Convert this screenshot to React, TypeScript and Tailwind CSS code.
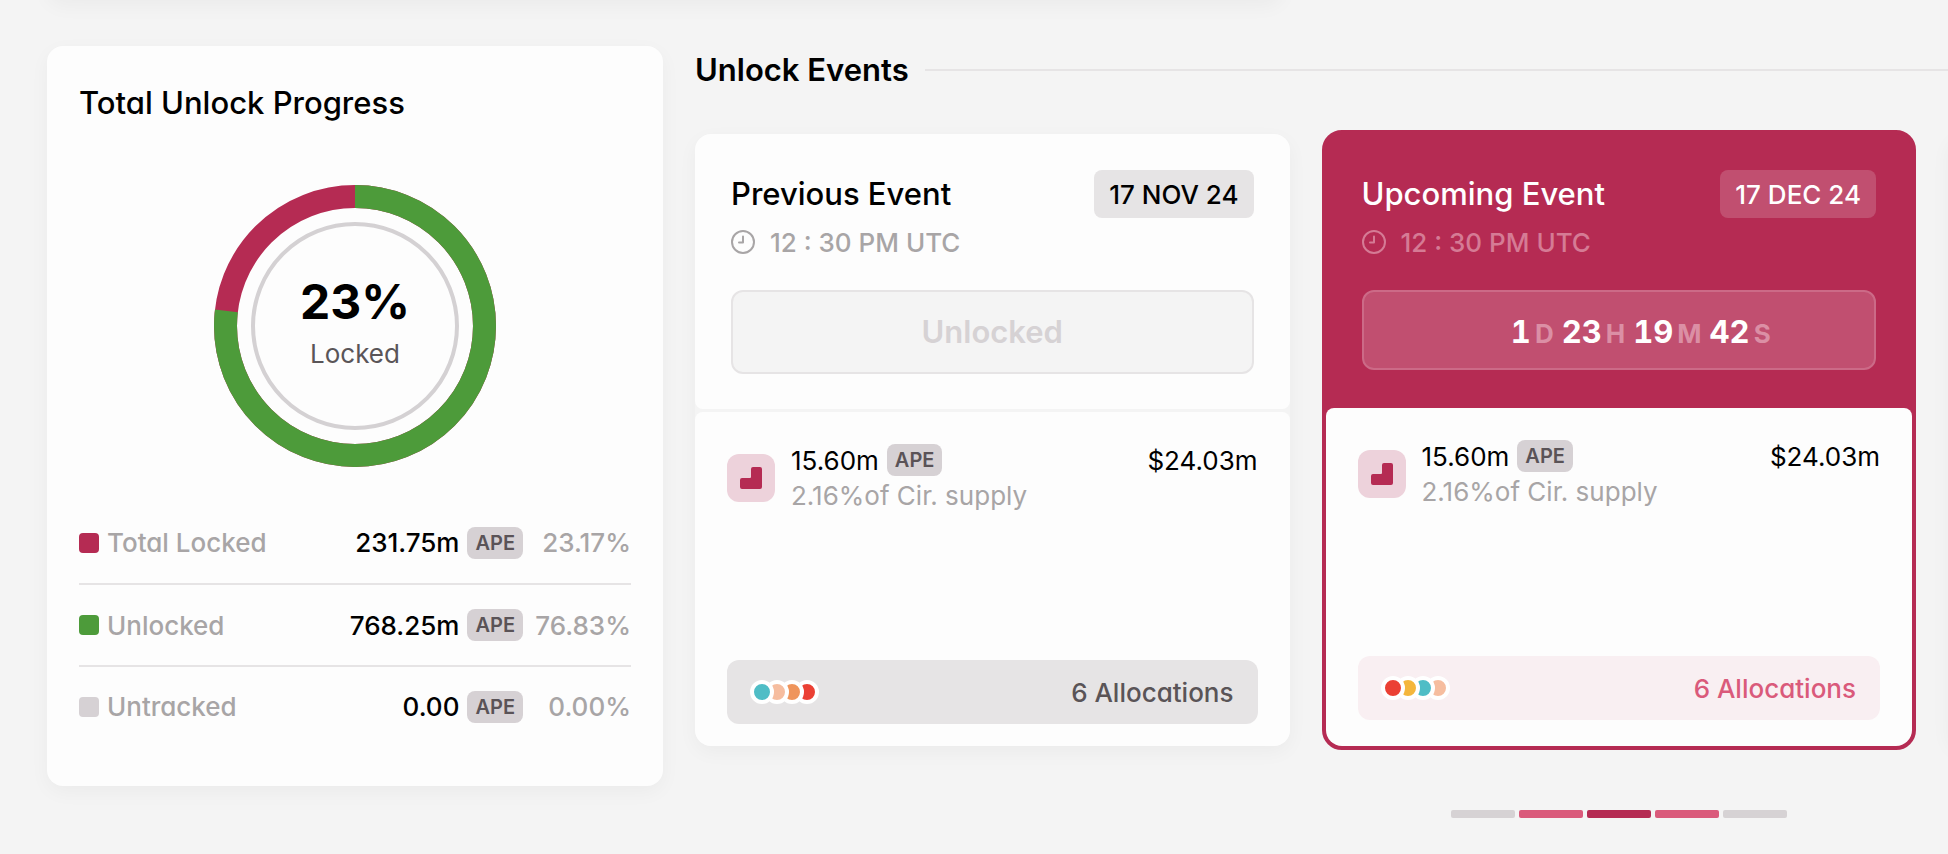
import { useState } from 'react';
import clsx from 'clsx';

const supply = [
  { label: 'Total Locked', amount: '231.75m', percent: '23.17%', swatch: 'bg-[#b52b53]' },
  { label: 'Unlocked', amount: '768.25m', percent: '76.83%', swatch: 'bg-[#4d9b3a]' },
  { label: 'Untracked', amount: '0.00', percent: '0.00%', swatch: 'bg-[#d6d1d4]' },
];

const countdown = [
  { value: '1', unit: 'D' },
  { value: '23', unit: 'H' },
  { value: '19', unit: 'M' },
  { value: '42', unit: 'S' },
];

const slides = [0, 1, 2, 3, 4];

function TokenBadge() {
  return (
    <span className="flex h-8 items-center rounded-lg bg-[#d6d1d4] px-2 text-xl font-semibold text-[#5a5357]">
      APE
    </span>
  );
}

function ClockIcon() {
  return (
    <svg viewBox="0 0 24 24" className="h-6 w-6" fill="none" stroke="currentColor" strokeWidth="2" aria-hidden="true">
      <circle cx="12" cy="12" r="11" />
      <path d="M12 6.5V12.5H8" strokeLinecap="round" strokeLinejoin="round" />
    </svg>
  );
}

function CliffIcon() {
  return (
    <span className="mt-[10px] flex h-12 w-12 shrink-0 items-center justify-center rounded-xl bg-[#edd2db]">
      <svg viewBox="0 0 22 22" className="h-[22px] w-[22px]" fill="#b52b53" aria-hidden="true">
        <path d="M13 0H20A2 2 0 0 1 22 2V20A2 2 0 0 1 20 22H2A2 2 0 0 1 0 20V13A2 2 0 0 1 2 11H10A1 1 0 0 0 11 10V2A2 2 0 0 1 13 0Z" />
      </svg>
    </span>
  );
}

function UnlockDonut() {
  const radius = 129.5;
  const length = 2 * Math.PI * radius;
  const unlocked = length * 0.7683;

  return (
    <div className="relative mx-auto mt-[62px] h-[282px] w-[282px]">
      <svg viewBox="0 0 282 282" className="h-full w-full" fill="none" aria-hidden="true">
        <circle cx="141" cy="141" r={radius} stroke="#b52b53" strokeWidth="23" />
        <circle
          cx="141"
          cy="141"
          r={radius}
          stroke="#4d9b3a"
          strokeWidth="23"
          strokeDasharray={`${unlocked} ${length}`}
          transform="rotate(-90 141 141)"
        />
        <circle cx="141" cy="141" r="102" stroke="#d4d1d3" strokeWidth="4" />
      </svg>
      <div className="absolute inset-0 flex flex-col items-center justify-center">
        <span className="text-5xl leading-14 font-bold">23%</span>
        <span className="text-[26px] leading-12 text-[#5a5558]">Locked</span>
      </div>
    </div>
  );
}

function Allocations({ colors, className }: { colors: string[]; className: string }) {
  return (
    <button
      type="button"
      className={clsx('mt-36 flex h-16 w-full items-center justify-between rounded-xl pr-6 pl-[23px] font-medium', className)}
    >
      <svg viewBox="0 0 69 24" className="h-6 w-[69px]" aria-hidden="true">
        {[...colors].reverse().map((color, i) => (
          <circle key={color} cx={57 - i * 15} cy="12" r="10" fill={color} stroke="#fff" strokeWidth="4" />
        ))}
      </svg>
      6 Allocations
    </button>
  );
}

function EventAmount() {
  return (
    <div className="flex gap-4">
      <CliffIcon />
      <div className="flex-1">
        <div className="flex h-8 items-center justify-between">
          <div className="flex items-center gap-2">
            15.60m
            <TokenBadge />
          </div>
          <span>$24.03m</span>
        </div>
        <p className="leading-10 text-[#a8a5a6]">2.16%of Cir. supply</p>
      </div>
    </div>
  );
}

function PreviousEvent() {
  return (
    <article className="rounded-2xl shadow-[0_6px_20px_rgba(0,0,0,0.04)]">
      <div className="rounded-t-2xl rounded-b-lg bg-[#fdfdfd] px-9 pt-9 pb-[35px]">
        <div className="flex h-12 items-center justify-between">
          <h3 className="text-[31px] font-medium">Previous Event</h3>
          <time className="flex h-12 items-center rounded-lg bg-[#e6e4e5] px-[15px] font-medium">17 NOV 24</time>
        </div>
        <p className="flex h-12 items-center gap-[15px] font-medium text-[#a8a5a6]">
          <ClockIcon />
          12 : 30 PM UTC
        </p>
        <div className="mt-6 flex h-[84px] items-center justify-center rounded-xl border-2 border-[#e6e4e5] bg-[#f4f4f4] text-[31px] font-semibold text-[#d6d2d4]">
          Unlocked
        </div>
      </div>
      <div className="mt-[3px] rounded-t-lg rounded-b-2xl bg-[#fdfdfd] px-8 pt-8 pb-[22px]">
        <EventAmount />
        <Allocations colors={['#4fbdc6', '#f6bd9f', '#ef955c', '#eb4034']} className="bg-[#e6e4e5] text-[#5a5457]" />
      </div>
    </article>
  );
}

function UpcomingEvent() {
  return (
    <article className="rounded-[20px] border-4 border-[#b52b53] bg-[#b52b53]">
      <div className="px-9 pt-9 pb-[38px] text-white">
        <div className="flex h-12 items-center justify-between">
          <h3 className="text-[31px] font-medium">Upcoming Event</h3>
          <time className="flex h-12 items-center rounded-lg bg-[#c14f70] px-[15px] font-medium">17 DEC 24</time>
        </div>
        <p className="flex h-12 items-center gap-[15px] font-medium text-[#d57b95]">
          <ClockIcon />
          12 : 30 PM UTC
        </p>
        <div className="mt-6 flex h-20 items-center justify-center gap-2 rounded-xl border-2 border-[#cc6a87] bg-[#c14f70] pt-1 pl-11">
          {countdown.map(({ value, unit }) => (
            <span key={unit} className="flex items-baseline gap-1 text-[31px] font-bold tabular-nums">
              {value}
              <span className="text-[26px] text-[#db8fa5]">{unit}</span>
            </span>
          ))}
        </div>
      </div>
      <div className="rounded-t-lg rounded-b-2xl bg-[#fdfdfd] px-8 pt-8 pb-[26px]">
        <EventAmount />
        <Allocations colors={['#eb4034', '#f4b63c', '#4fbdc6', '#f6bd9f']} className="bg-[#f9eff2] text-[#da5a7b]" />
      </div>
    </article>
  );
}

export default function App() {
  const [active, setActive] = useState(2);

  return (
    <div className="min-h-screen overflow-hidden bg-[#f4f4f4] pl-[47px] font-['Inter',sans-serif] text-[26px] text-black [font-feature-settings:'cv11']">
      {/* Bottom edge of the card above */}
      <div className="-mt-16 h-16 w-[65%] rounded-2xl bg-[#fdfdfd] shadow-[0_6px_20px_rgba(0,0,0,0.04)]" />

      <main className="mt-[46px] grid grid-cols-[minmax(0,616fr)_minmax(0,1253fr)] items-start gap-8">
        <section className="rounded-2xl bg-[#fdfdfd] px-8 pt-[37px] pb-10 shadow-[0_6px_20px_rgba(0,0,0,0.04)]">
          <h2 className="text-[31px] leading-10 font-medium">Total Unlock Progress</h2>
          <UnlockDonut />
          <table className="mt-[35px] w-full font-medium">
            <tbody>
              {supply.map((row) => (
                <tr key={row.label} className="h-[82px] border-b-2 border-[#e6e4e5] last:h-20 last:border-b-0">
                  <th scope="row" className="p-0 text-left font-medium text-[#a8a5a6]">
                    <span className="flex items-center gap-2">
                      <span className={clsx('h-5 w-5 rounded', row.swatch)} />
                      {row.label}
                    </span>
                  </th>
                  <td className="p-0">
                    <span className="flex items-center justify-end gap-2">
                      {row.amount}
                      <TokenBadge />
                    </span>
                  </td>
                  <td className="w-[108px] p-0 text-right text-[#a8a5a6]">{row.percent}</td>
                </tr>
              ))}
            </tbody>
          </table>
        </section>

        <section>
          <div className="flex h-12 items-center gap-4">
            <h2 className="text-[31px] font-semibold">Unlock Events</h2>
            <div className="h-[2px] flex-1 bg-[#e6e4e5]" />
          </div>
          <div className="mt-9 grid auto-cols-[calc(50%-32px)] grid-flow-col items-center gap-x-8">
            <PreviousEvent />
            <UpcomingEvent />
            <div className="h-[612px] rounded-2xl bg-[#fdfdfd] shadow-[0_6px_20px_rgba(0,0,0,0.04)]" />
          </div>
          <div className="mt-[60px] grid grid-cols-[calc(50%-32px)_calc(50%-32px)] gap-x-8">
            <div className="col-start-2 flex justify-center gap-1">
              {slides.map((slide) => (
                <button
                  key={slide}
                  type="button"
                  aria-label={`Event ${slide + 1}`}
                  onClick={() => setActive(slide)}
                  className={clsx(
                    'h-2 w-16 rounded-xs',
                    slide === active && 'bg-[#b52b53]',
                    Math.abs(slide - active) === 1 && 'bg-[#da5a7b]',
                    Math.abs(slide - active) > 1 && 'bg-[#d6d2d4]'
                  )}
                />
              ))}
            </div>
          </div>
        </section>
      </main>
    </div>
  );
}
